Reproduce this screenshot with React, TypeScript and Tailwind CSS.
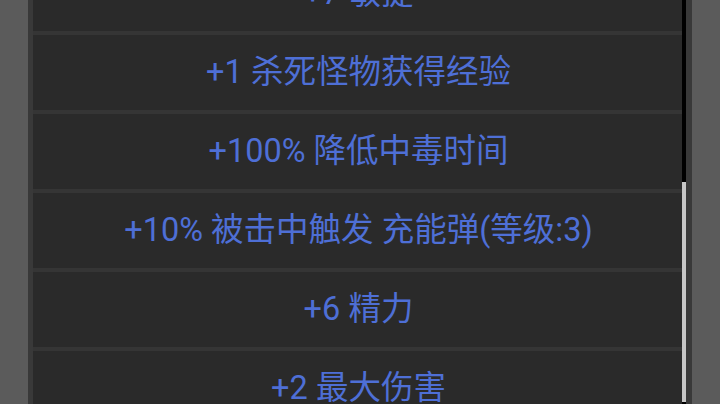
import React from "react";

const stats = [
  "+7 敏捷",
  "+1 杀死怪物获得经验",
  "+100% 降低中毒时间",
  "+10% 被击中触发 充能弹(等级:3)",
  "+6 精力",
  "+2 最大伤害",
];

export default function App() {
  return (
    <div className="flex h-[404px] w-full overflow-hidden bg-[#5b5b5b]">
      <div className="w-[28px] shrink-0" />
      <div className="w-[5px] shrink-0 bg-[#393939]" />
      <div className="w-[649px] shrink-0 overflow-hidden bg-[#2a2a2a]">
        <ul className="-mt-[44px]">
          {stats.map((s) => (
            <li
              key={s}
              className="flex h-[79px] items-center justify-center border-b-4 border-[#353535] pl-[2px] text-[32.5px] leading-none text-[#4e6fd6]"
              style={{ fontFamily: 'Roboto, "Noto Sans CJK SC", sans-serif' }}
            >
              {s}
            </li>
          ))}
        </ul>
      </div>
      <div className="flex w-[4px] shrink-0 flex-col bg-black pt-[182px]">
        <div className="h-[220px] bg-[#c6c6c6]" />
      </div>
      <div className="w-[6px] shrink-0 bg-[#393939]" />
      <div className="flex-1" />
    </div>
  );
}
